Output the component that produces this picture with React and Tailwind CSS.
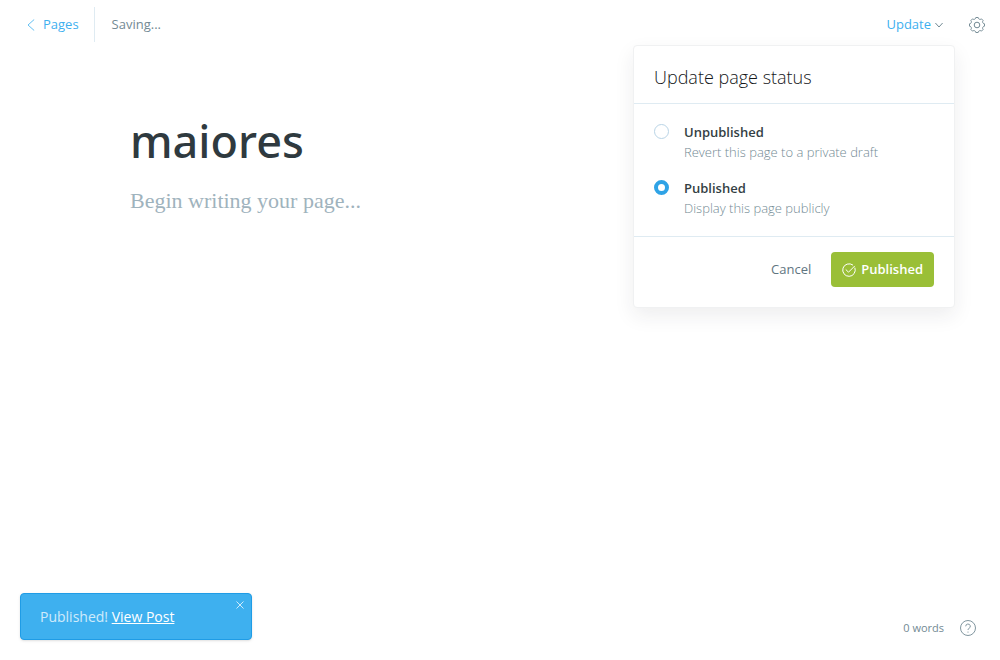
import React, { useState } from "react";

function ArrowLeft() {
  return (
    <svg className="h-3 w-2" viewBox="0 0 8 12" fill="none" stroke="#3eb0ef" strokeWidth="0.8" aria-hidden="true">
      <path d="M7.2 0.5 1 6l6.2 5.5" />
    </svg>
  );
}

function ChevronDown() {
  return (
    <svg className="h-2 w-2" viewBox="0 0 8 8" fill="none" stroke="#738a94" aria-hidden="true">
      <path d="M0.4 2 4 6l3.6-4" />
    </svg>
  );
}

function Gear() {
  return (
    <svg className="h-4 w-4" viewBox="0 0 24 24" fill="none" stroke="#738a94" strokeWidth="1.5" strokeLinejoin="round" aria-hidden="true">
      <path d="M10.2.8h3.6A2.9 2.9 0 0 0 18.65 2.81L21.19 5.35A2.9 2.9 0 0 0 23.2 10.2V13.8A2.9 2.9 0 0 0 21.19 18.65L18.65 21.19A2.9 2.9 0 0 0 13.8 23.2H10.2A2.9 2.9 0 0 0 5.35 21.19L2.81 18.65A2.9 2.9 0 0 0 .8 13.8V10.2A2.9 2.9 0 0 0 2.81 5.35L5.35 2.81A2.9 2.9 0 0 0 10.2.8z" />
      <circle cx="12" cy="12" r="4.2" />
    </svg>
  );
}

function CheckCircle() {
  return (
    <svg className="h-3.5 w-3.5" viewBox="0 0 14 14" fill="none" stroke="white" strokeLinecap="round" strokeLinejoin="round" aria-hidden="true">
      <path d="M13 5A6.3 6.3 0 1 1 10.7 1.9" />
      <path d="M4 6.7 6.5 9.2 12.5 3.2" />
    </svg>
  );
}

function Help() {
  return (
    <svg className="h-4 w-4" viewBox="0 0 16 16" fill="none" stroke="#738a94" strokeWidth="0.9" aria-hidden="true">
      <circle cx="8" cy="8" r="7.5" />
      <path d="M5.7 6.3a2.3 2.3 0 1 1 3.3 2.1c-.7.3-1 .7-1 1.5" />
      <circle cx="8" cy="12" r=".6" fill="#738a94" stroke="none" />
    </svg>
  );
}

const OPTIONS = [
  { value: "draft", label: "Unpublished", hint: "Revert this page to a private draft" },
  { value: "published", label: "Published", hint: "Display this page publicly" },
];

function StatusMenu() {
  const [status, setStatus] = useState("published");
  return (
    <section
      aria-label="Update page status"
      className="absolute top-full right-[45px] w-[322px] rounded border border-[#f0f1f2] bg-white shadow-[0_8px_20px_rgba(39,44,49,0.08)]"
    >
      <h2 className="border-b border-[#dfebf2] px-5 pt-[19px] pb-[13px] text-lg leading-[25px] font-light text-[#15171a]">Update page status</h2>
      <div className="flex flex-col gap-4 border-b border-[#dfebf2] px-5 py-[18px]">
        {OPTIONS.map((o) => (
          <label key={o.value} className="flex gap-[15px]">
            <input
              type="radio"
              name="status"
              value={o.value}
              checked={status === o.value}
              onChange={() => setStatus(o.value)}
              className="mt-0.5 h-[15px] w-[15px] appearance-none rounded-full border border-[#b9d4e6] bg-white checked:border-4 checked:border-[#2fa3e6]"
            />
            <span className="flex flex-col text-[13px] leading-5">
              <span className="font-semibold text-[#343f44]">{o.label}</span>
              <span className="font-light text-[#738a94]">{o.hint}</span>
            </span>
          </label>
        ))}
      </div>
      <div className="flex items-center justify-end gap-5 px-5 pt-[15px] pb-5 text-[13px]">
        <button type="button" className="text-[#5f757f]">Cancel</button>
        <button type="button" className="flex h-[35px] items-center gap-[5px] rounded bg-[#9abf37] px-[11px] font-semibold text-white">
          <CheckCircle />
          Published
        </button>
      </div>
    </section>
  );
}

export default function App() {
  return (
    <div className="flex min-h-screen flex-col bg-white font-['Open_Sans','Noto_Sans',sans-serif] text-[13px]">
      <header className="relative flex h-[45px] items-center justify-between pt-1 pr-[15px] pl-[27px]">
        <div className="flex items-center">
          <a href="#pages" className="flex h-[35px] items-center gap-2 border-r border-[#dfebf2] pr-[15px] text-[#3eb0ef]">
            <ArrowLeft />
            Pages
          </a>
          <span className="pl-[17px] text-[#738a94]">Saving...</span>
        </div>
        <div className="flex items-center gap-[26px]">
          <button type="button" className="flex items-center gap-1 text-[#3eb0ef]">
            Update
            <ChevronDown />
          </button>
          <button type="button" aria-label="Settings">
            <Gear />
          </button>
        </div>
        <StatusMenu />
      </header>
      <main className="mx-auto w-full max-w-[740px] grow pt-16">
        <h1 className="font-['Noto_Sans',sans-serif] text-[45px] leading-[64px] font-medium text-[#2f3a3f]">maiores</h1>
        <p className="mt-3 font-['Liberation_Serif',serif] text-[22px] leading-8 text-[#9fb3bd]">Begin writing your page...</p>
      </main>
      <footer className="flex items-end justify-between pr-6 pb-5 pl-5">
        <div role="status" className="flex h-[47px] w-[232px] items-center justify-between rounded border border-[#1f9ce6] bg-[#3eb0ef] pr-[7px] pl-[19px] text-sm text-white shadow-sm">
          <p>
            <span className="opacity-75">Published!</span> <a href="#post" className="underline">View Post</a>
          </p>
          <button type="button" aria-label="Close" className="flex self-start pt-[7px]">
            <svg className="h-2 w-2" viewBox="0 0 8 8" stroke="white" strokeOpacity="0.75" aria-hidden="true">
              <path d="m.5.5 7 7m0-7-7 7" />
            </svg>
          </button>
        </div>
        <div className="flex items-center gap-4 text-[11px] leading-6 text-[#738a94]">
          <span>0 words</span>
          <button type="button" aria-label="Help">
            <Help />
          </button>
        </div>
      </footer>
    </div>
  );
}
